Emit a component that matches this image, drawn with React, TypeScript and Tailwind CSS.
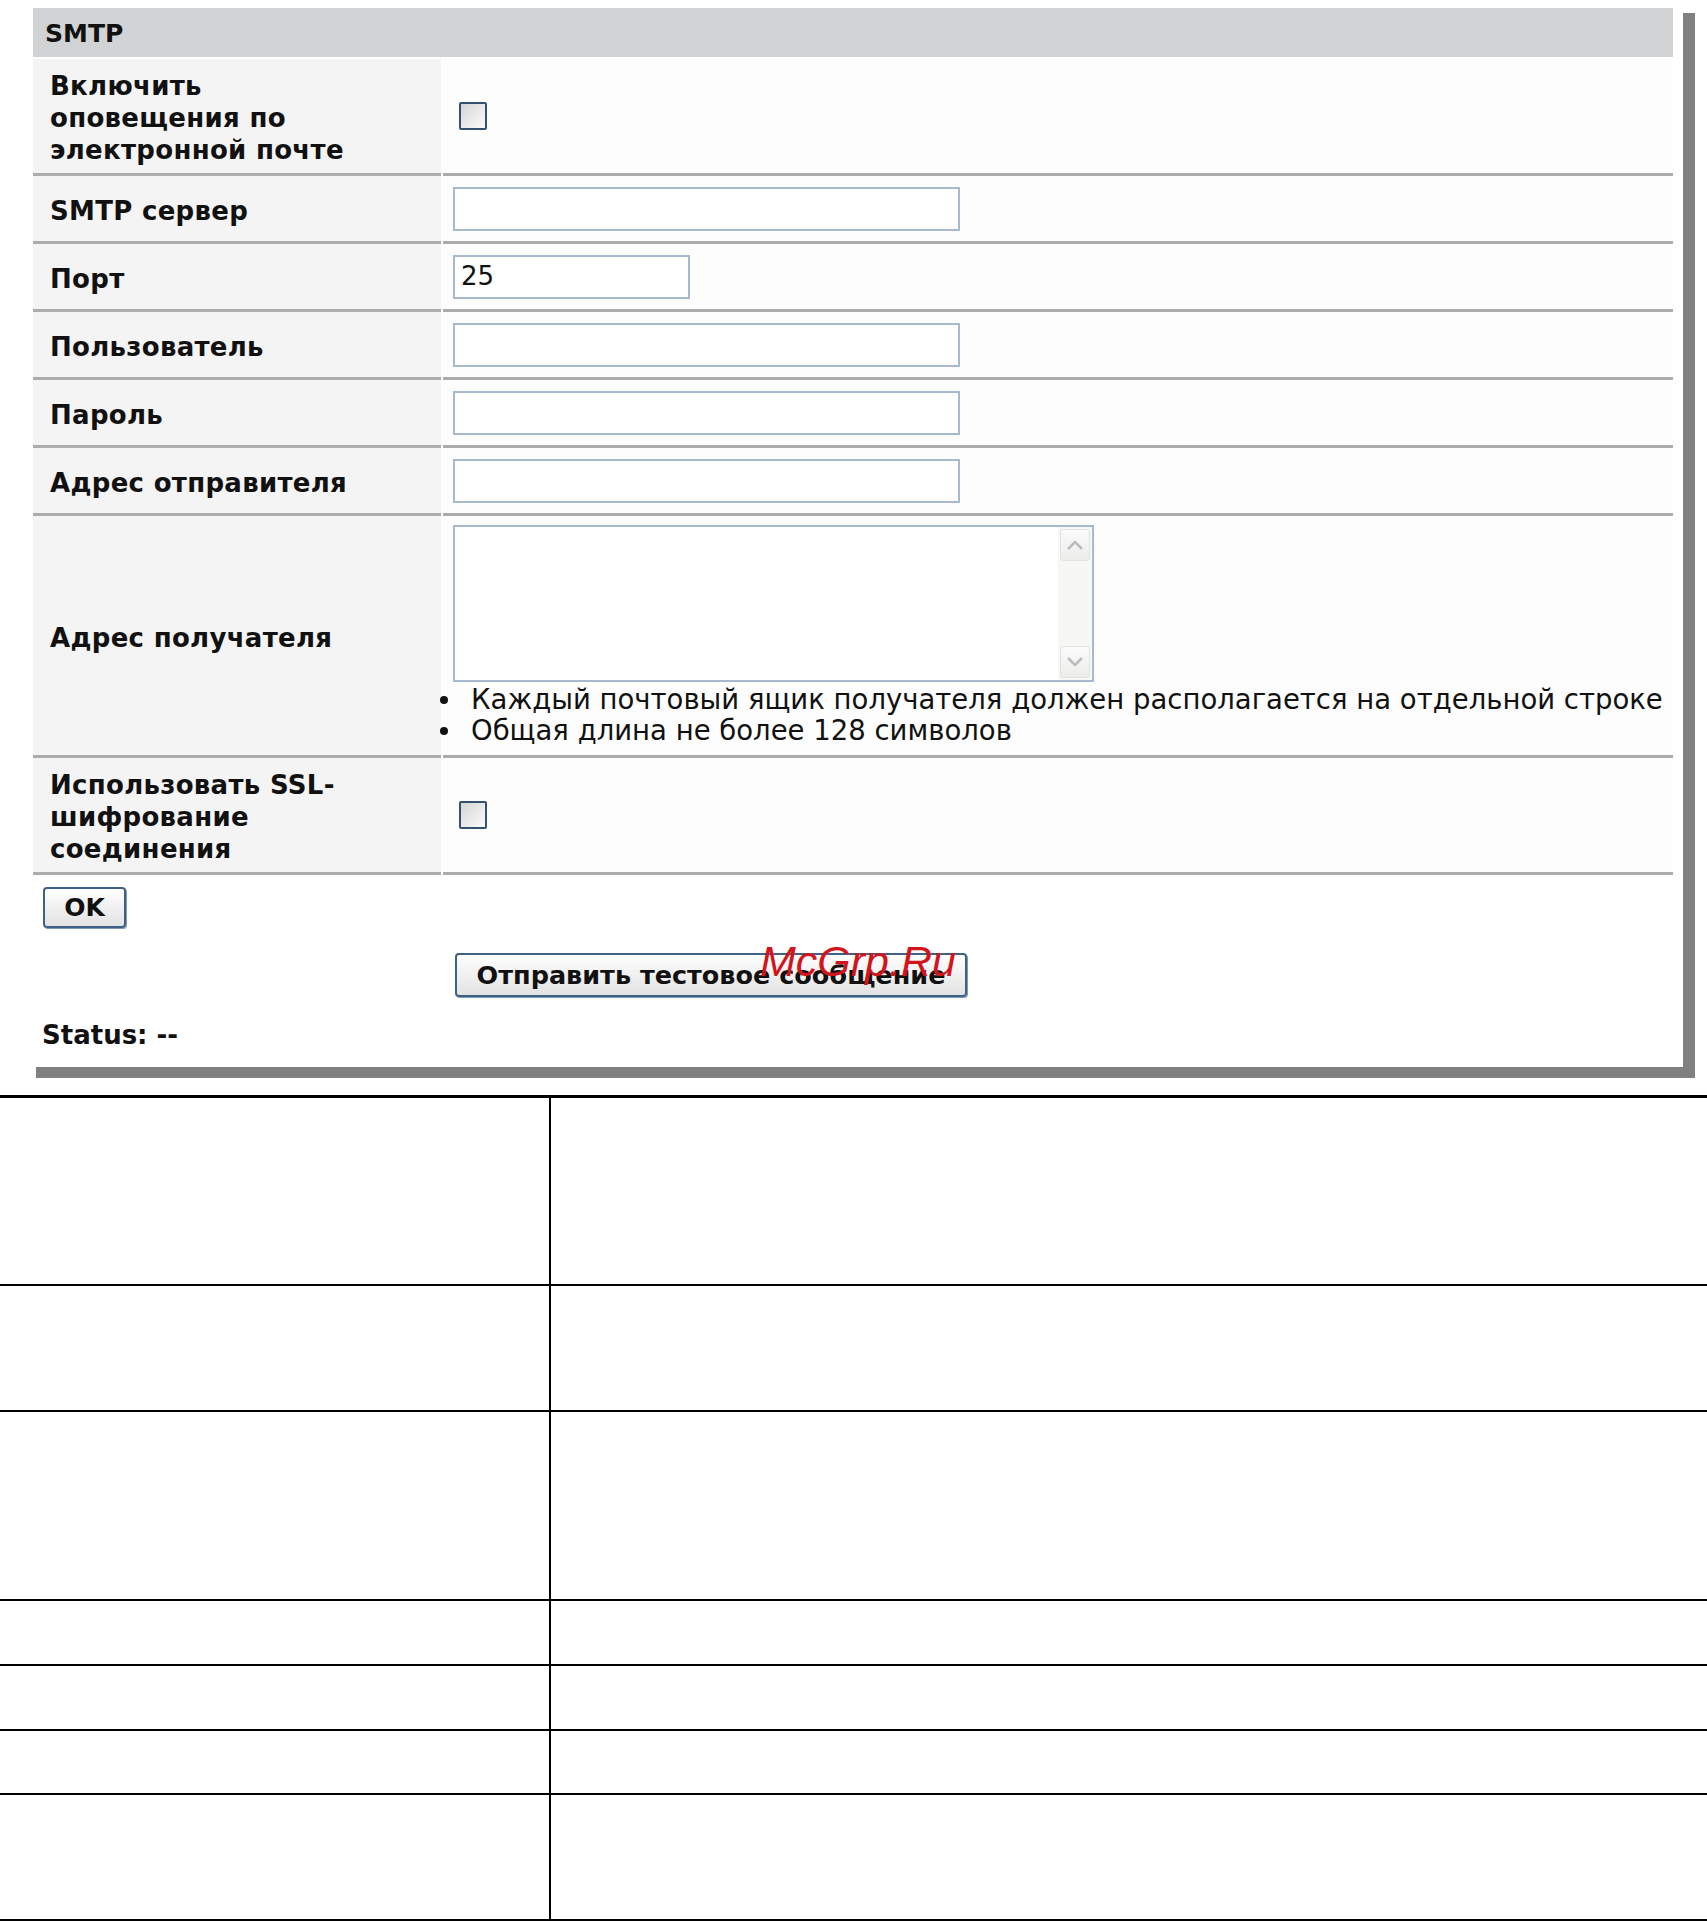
import React from "react";

const Label = ({ children }: { children: React.ReactNode }) => (
  <div className="w-[408px] shrink-0 bg-[#f4f4f4] border-b-[3px] border-[#acacac] flex items-center pl-[17px] pr-2 pt-[4px] font-bold text-[26px] leading-[32px] tracking-[0.3px] text-[#111]">
    <div>{children}</div>
  </div>
);

const Row = ({
  label,
  h,
  children,
  valueClass = "",
}: {
  label: React.ReactNode;
  h: string;
  children?: React.ReactNode;
  valueClass?: string;
}) => (
  <div className={`flex gap-[2px] ${h}`}>
    <Label>{label}</Label>
    <div className={`flex-1 bg-[#fdfdfd] border-b-[3px] border-[#acacac] pl-[10px] ${valueClass}`}>{children}</div>
  </div>
);

const Checkbox = () => (
  <div className="ml-[6px] w-[28px] h-[28px] border-2 border-[#34526f] rounded-[2px] bg-gradient-to-br from-[#d6d6d6] to-[#fbfbfb]" />
);

const TextInput = ({ w, value }: { w: string; value?: string }) => (
  <div className={`${w} h-[44px] border-2 border-[#a6b9cf] bg-white flex items-center pl-[6px] text-[26px] text-[#111]`}>
    {value}
  </div>
);

const Chevron = ({ up }: { up?: boolean }) => (
  <svg width="18" height="12" viewBox="0 0 18 12">
    <path
      d={up ? "M2 10 L9 3 L16 10" : "M2 2 L9 9 L16 2"}
      fill="none"
      stroke="#b9bcc0"
      strokeWidth="2.5"
      strokeLinejoin="round"
    />
  </svg>
);

const Bullet = () => (
  <span className="w-[30px] -ml-[4px] mr-[2px] flex items-center">
    <span className="block w-[8px] h-[8px] rounded-full bg-[#111] ml-[1px]" />
  </span>
);

export default function App() {
  return (
    <div className="relative w-[1707px] h-[1923px] bg-white font-['DejaVu_Sans','Verdana',sans-serif] text-[#111]">
      <div className="pt-[8px] pl-[30px]">
        <div className="w-[1653px] h-[1059px] bg-white shadow-[9px_8px_0_3px_#808080] pl-[3px] pr-[10px]">
          {/* header */}
          <div className="h-[49px] bg-[#d1d3d5] flex items-center pl-[12px] pt-[2px] font-bold text-[25px]">SMTP</div>
          <div className="h-[2px]" />
          <Row label={<>Включить<br />оповещения по<br />электронной почте</>} h="h-[117px]" valueClass="flex items-center">
            <Checkbox />
          </Row>
          <Row label="SMTP сервер" h="h-[68px]" valueClass="flex items-center">
            <TextInput w="w-[507px]" />
          </Row>
          <Row label="Порт" h="h-[68px]" valueClass="flex items-center">
            <TextInput w="w-[237px]" value="25" />
          </Row>
          <Row label="Пользователь" h="h-[68px]" valueClass="flex items-center">
            <TextInput w="w-[507px]" />
          </Row>
          <Row label="Пароль" h="h-[68px]" valueClass="flex items-center">
            <TextInput w="w-[507px]" />
          </Row>
          <Row label="Адрес отправителя" h="h-[68px]" valueClass="flex items-center">
            <TextInput w="w-[507px]" />
          </Row>
          <Row label="Адрес получателя" h="h-[242px]" valueClass="pt-[9px] !pl-0">
            <div className="ml-[10px] w-[641px] h-[157px] border-2 border-[#a6b9cf] bg-white flex justify-end">
              <div className="w-[34px] h-full bg-[#f7f7f5] flex flex-col justify-between p-[2px]">
                <div className="h-[32px] rounded-[3px] border border-[#e2e2df] bg-gradient-to-b from-[#fbfbfb] to-[#ececea] flex items-center justify-center">
                  <Chevron up />
                </div>
                <div className="h-[32px] rounded-[3px] border border-[#e2e2df] bg-gradient-to-b from-[#fbfbfb] to-[#ececea] flex items-center justify-center">
                  <Chevron />
                </div>
              </div>
            </div>
            <ul className="mt-[2px] text-[27.5px] leading-[31px] text-[#111]">
              <li className="flex">
                <Bullet />
                <span>Каждый почтовый ящик получателя должен располагается на отдельной строке</span>
              </li>
              <li className="flex">
                <Bullet />
                <span>Общая длина не более 128 символов</span>
              </li>
            </ul>
          </Row>
          <Row label={<>Использовать SSL-<br />шифрование<br />соединения</>} h="h-[117px]" valueClass="flex items-center">
            <Checkbox />
          </Row>

          {/* buttons */}
          <div className="pt-[12px] pl-[10px]">
            <button className="w-[83px] h-[41px] border-2 border-[#3f6185] rounded-[4px] bg-gradient-to-b from-white to-[#e2e2e2] shadow-[1px_1px_0_#7f98b3] font-bold text-[25px] text-[#111]">
              OK
            </button>
          </div>
          <div className="pt-[25px] pl-[422px]">
            <button className="w-[512px] h-[44px] border-2 border-[#3f6185] rounded-[4px] bg-gradient-to-b from-white to-[#e2e2e2] shadow-[1px_1px_0_#7f98b3] font-bold text-[25.5px] text-[#111]">
              Отправить тестовое сообщение
            </button>
          </div>
          <div className="pt-[22px] pl-[9px] font-bold text-[26px] leading-[32px]">Status: --</div>
        </div>
      </div>

      {/* watermark */}
      <div className="absolute left-[760px] top-[936px] font-['Liberation_Sans',sans-serif] italic text-[43px] leading-[50px] text-[#d2141b]">
        McGrp.Ru
      </div>

      {/* bottom table */}
      <div className="mt-[28px] border-t-[3px] border-black">
        {[188, 126, 189, 65, 65, 64, 126].map((h, i) => (
          <div key={i} className="flex border-b-2 border-black" style={{ height: h }}>
            <div className="w-[551px] shrink-0 border-r-2 border-black" />
            <div className="flex-1" />
          </div>
        ))}
      </div>
    </div>
  );
}
